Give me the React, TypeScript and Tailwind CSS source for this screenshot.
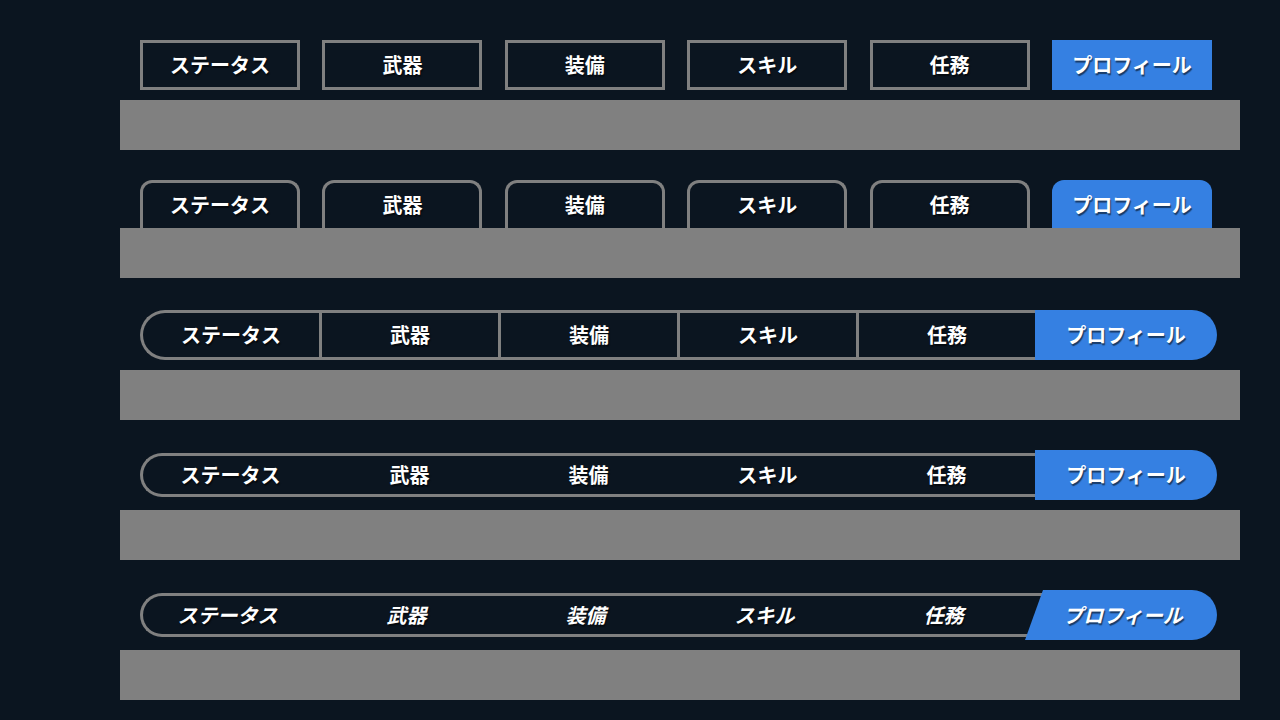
const tabs = ["ステータス", "武器", "装備", "スキル", "任務"];
const active = "プロフィール";

const label =
  "font-['Noto_Sans_CJK_JP',sans-serif] font-bold text-[20px] text-white [text-shadow:1px_2px_1px_rgba(0,0,0,0.55)]";

const Bar = ({ className = "" }: { className?: string }) => (
  <div className={`h-[50px] bg-[#808080] ${className}`} />
);

export default function App() {
  return (
    <div className="min-h-screen w-full bg-[#0b1520] pl-[120px] pr-[40px] pt-[40px]">
      {/* boxed tabs */}
      <div className="flex h-[50px] justify-between pl-5 pr-7">
        {tabs.map((t) => (
          <div key={t} className="flex w-[160px] items-center justify-center border-[3px] border-[#808080]">
            <span className={label}>{t}</span>
          </div>
        ))}
        <div className="flex w-[160px] items-center justify-center bg-[#3580e2]">
          <span className={label}>{active}</span>
        </div>
      </div>
      <Bar className="mt-[10px]" />

      {/* folder tabs */}
      <div className="mt-[30px] flex h-[48px] items-end justify-between pl-5 pr-7">
        {tabs.map((t) => (
          <div
            key={t}
            className="flex h-[48px] w-[160px] items-center justify-center rounded-t-[12px] border-[3px] border-b-0 border-[#808080] pb-[2px]"
          >
            <span className={label}>{t}</span>
          </div>
        ))}
        <div className="flex h-[48px] w-[160px] items-center justify-center rounded-t-[12px] bg-[#3580e2] pt-[1px]">
          <span className={label}>{active}</span>
        </div>
      </div>
      <Bar />

      {/* segmented */}
      <div className="ml-5 mt-[32px] flex h-[50px] w-[1077px]">
        {tabs.map((t, i) => (
          <div
            key={t}
            className={`flex flex-1 items-center justify-center border-y-[3px] border-l-[3px] border-[#808080] ${
              i === 0 ? "rounded-l-full" : ""
            }`}
          >
            <span className={label}>{t}</span>
          </div>
        ))}
        <div className="flex w-[182px] items-center justify-center rounded-r-full bg-[#3580e2]">
          <span className={label}>{active}</span>
        </div>
      </div>
      <Bar className="mt-[10px]" />

      {/* pill */}
      <div className="ml-5 mt-[30px] flex h-[50px] w-[1077px] items-center">
        <div className="flex h-[44px] w-[903px] items-center rounded-l-full border-[3px] border-r-0 border-[#808080]">
          <div className="-ml-[2px] flex">
            {tabs.map((t) => (
              <div key={t} className="flex w-[179px] items-center justify-center">
                <span className={label}>{t}</span>
              </div>
            ))}
          </div>
        </div>
        <div className="relative -ml-[8px] flex h-[50px] w-[182px] items-center justify-center rounded-l-[5px] rounded-r-full bg-[#3580e2]">
          <span className={label}>{active}</span>
        </div>
      </div>
      <Bar className="mt-[10px]" />

      {/* slanted pill */}
      <div className="ml-5 mt-[30px] flex h-[50px] w-[1077px] items-center">
        <div className="flex h-[44px] w-[910px] items-center rounded-l-full border-[3px] border-r-0 border-[#808080]">
          <div className="-ml-[5px] flex">
            {tabs.map((t) => (
              <div key={t} className="flex w-[179px] items-center justify-center">
                <span className={`${label} italic`}>{t}</span>
              </div>
            ))}
          </div>
        </div>
        <div className="relative -ml-[25px] flex h-[50px] w-[192px] items-center justify-center rounded-r-full bg-[#3580e2] pl-1 [clip-path:polygon(18px_0,100%_0,100%_100%,0_100%)]">
          <span className={`${label} italic`}>{active}</span>
        </div>
      </div>
      <Bar className="mt-[10px]" />
    </div>
  );
}
